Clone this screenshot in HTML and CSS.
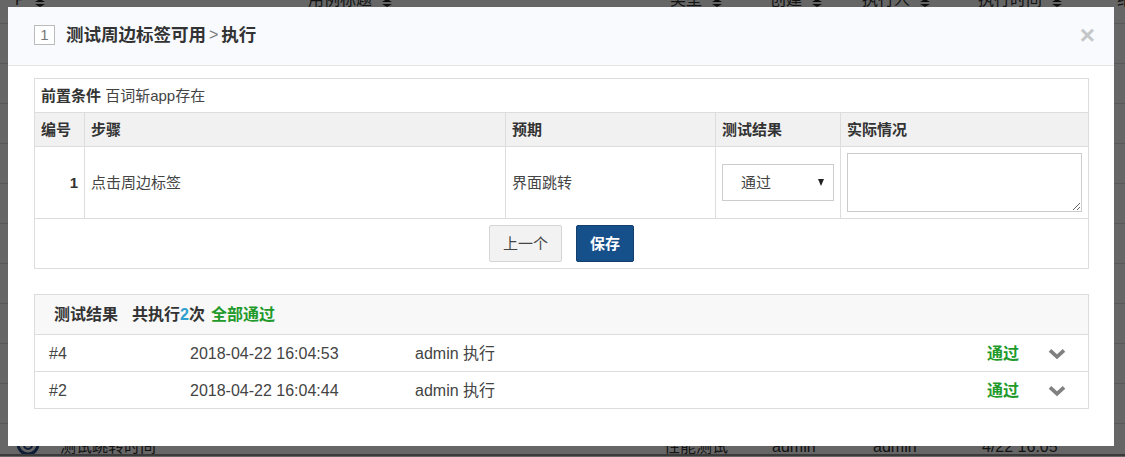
FILE: index.html
```html
<!DOCTYPE html>
<html lang="zh">
<head>
<meta charset="utf-8">
<title>测试周边标签可用 执行</title>
<link rel="stylesheet" href="styles.css">
</head>
<body>
<div class="page">
  <div class="bg-head">
    <span class="bh bh-id">P<svg class="sort" viewBox="0 0 10 8" width="10" height="8"><path d="M5 0 10 3H0zM5 8 0 5h10z"/></svg></span>
    <span class="bh bh-title">用例标题<svg class="sort" viewBox="0 0 10 8" width="10" height="8"><path d="M5 0 10 3H0zM5 8 0 5h10z"/></svg></span>
    <span class="bh bh-type">类型<svg class="sort" viewBox="0 0 10 8" width="10" height="8"><path d="M5 0 10 3H0zM5 8 0 5h10z"/></svg></span>
    <span class="bh bh-create">创建<svg class="sort" viewBox="0 0 10 8" width="10" height="8"><path d="M5 0 10 3H0zM5 8 0 5h10z"/></svg></span>
    <span class="bh bh-exec">执行人<svg class="sort" viewBox="0 0 10 8" width="10" height="8"><path d="M5 0 10 3H0zM5 8 0 5h10z"/></svg></span>
    <span class="bh bh-time">执行时间<svg class="sort" viewBox="0 0 10 8" width="10" height="8"><path d="M5 0 10 3H0zM5 8 0 5h10z"/></svg></span>
    <span class="bh bh-more">结果</span>
  </div>
  <div class="bg-row"></div><div class="bg-row"></div><div class="bg-row"></div><div class="bg-row"></div><div class="bg-row"></div>
  <div class="bg-row"></div><div class="bg-row"></div><div class="bg-row"></div><div class="bg-row"></div><div class="bg-row"></div>
  <div class="bg-row bg-last">
    <svg class="bg-pri" viewBox="0 0 24 24" width="24" height="24"><circle cx="12" cy="12" r="10" fill="none" stroke="#2a4d86" stroke-width="3"/><circle cx="12" cy="13" r="4" fill="none" stroke="#2a4d86" stroke-width="2"/></svg>
    <span class="bg-name">测试跳转时间</span>
    <span class="bg-type">性能测试</span>
    <span class="bg-creator">admin</span>
    <span class="bg-runner">admin</span>
    <span class="bg-date">4/22 16:05</span>
  </div>
</div>

<div class="backdrop"></div>

<div class="modal">
  <header class="modal-header">
    <span class="case-id">1</span>
    <strong class="modal-title">测试周边标签可用</strong>
    <span class="crumb">&gt;</span>
    <strong class="modal-title">执行</strong>
    <span class="close">×</span>
  </header>
  <div class="modal-body">
    <table class="steps">
      <colgroup>
        <col class="c-num"><col class="c-step"><col class="c-expect"><col class="c-result"><col class="c-real">
      </colgroup>
      <tr class="pre-row">
        <td colspan="5"><strong>前置条件</strong> 百词斩app存在</td>
      </tr>
      <tr class="head-row">
        <th>编号</th><th>步骤</th><th>预期</th><th>测试结果</th><th>实际情况</th>
      </tr>
      <tr class="step-row">
        <td class="num">1</td>
        <td>点击周边标签</td>
        <td>界面跳转</td>
        <td class="cell-select">
          <div class="select"><span>通过</span><i class="arrow"></i></div>
        </td>
        <td class="cell-area"><textarea class="area"></textarea></td>
      </tr>
      <tr class="action-row">
        <td colspan="5">
          <div class="actions">
            <button class="btn btn-prev" type="button">上一个</button>
            <button class="btn btn-save" type="button">保存</button>
          </div>
        </td>
      </tr>
    </table>

    <section class="results">
      <div class="results-head">
        <strong class="rh-title">测试结果</strong>
        <strong class="rh-count">共执行<span class="blue">2</span>次</strong>
        <strong class="green">全部通过</strong>
      </div>
      <div class="result-row">
        <span class="r-id">#4</span>
        <span class="r-date">2018-04-22 16:04:53</span>
        <span class="r-user">admin 执行</span>
        <strong class="r-status">通过</strong>
        <svg class="chev" viewBox="0 0 18 12" width="18" height="12"><path d="M2 2.4 9 8.8l7-6.4" fill="none" stroke="#808080" stroke-width="3.8"/></svg>
      </div>
      <div class="result-row">
        <span class="r-id">#2</span>
        <span class="r-date">2018-04-22 16:04:44</span>
        <span class="r-user">admin 执行</span>
        <strong class="r-status">通过</strong>
        <svg class="chev" viewBox="0 0 18 12" width="18" height="12"><path d="M2 2.4 9 8.8l7-6.4" fill="none" stroke="#808080" stroke-width="3.8"/></svg>
      </div>
    </section>
  </div>
</div>
</body>
</html>
```
FILE: styles.css
```css
* { box-sizing: border-box; }
html, body { margin: 0; height: 457px; overflow: hidden; }
body {
  font-family: "Liberation Sans", "Noto Sans CJK SC", sans-serif;
  font-size: 15px;
  line-height: 20px;
  color: #333;
  background: #fff;
}

/* page beneath the dialog */
.page { height: 473px; overflow: hidden; margin-top: -16px; }
.bg-head {
  height: 40px;
  display: flex;
  align-items: flex-start;
  border-bottom: 1px solid #ddd;
  font-size: 16px;
  padding: 6px 0 0 15px;
}
.bh { display: flex; align-items: center; flex: none; white-space: nowrap; }
.bh-id { width: 293px; }
.bh-title { width: 362px; }
.bh-type { width: 100px; }
.bh-create { width: 92px; }
.bh-exec { width: 116px; }
.bh-time { width: 139px; }
.sort { margin: 5px 0 0 10px; fill: #222; flex: none; }
.bh-id .sort { margin-left: 9px; }
.bg-row { height: 40px; border-bottom: 1px solid #ddd; }
.bg-last {
  display: flex;
  align-items: flex-start;
  padding-top: 13px;
  font-size: 16px;
  border-bottom: 0;
}
.bg-pri { flex: none; margin: -5px 20px 0 16px; }
.bg-name { width: 604px; }
.bg-type { width: 108px; }
.bg-creator { width: 101px; }
.bg-runner { width: 109px; }

.backdrop {
  position: fixed;
  inset: 0;
  background: rgba(0, 0, 0, .6);
}
.backdrop::after {
  content: "";
  position: absolute;
  left: 0; right: 0; bottom: 1px;
  height: 2px;
  background: #3a3a3a;
}

/* dialog */
.modal {
  position: fixed;
  left: 8px;
  top: 7px;
  width: 1106px;
  height: 439px;
  background: #fff;
}
.modal-header {
  height: 59px;
  display: flex;
  align-items: center;
  padding: 0 26px 2px;
  background: #f8fafe;
  border-bottom: 1px solid #e5e5e5;
}
.case-id {
  width: 21px;
  height: 20px;
  border: 1px solid #bbb;
  font-size: 15px;
  line-height: 18px;
  text-align: center;
  color: #777;
  background: #fff;
  margin-right: 11px;
}
.modal-title { font-size: 17.5px; font-weight: 700; color: #333; line-height: 24px; }
.crumb { font-size: 16px; color: #777; margin: 0 3px 0 3px; line-height: 24px; }
.close {
  margin-left: auto;
  margin-right: -7px;
  font-size: 26px;
  line-height: 24px;
  font-weight: 700;
  color: #c4c6c8;
}
.modal-body { padding: 12px 25px 0 26px; }

/* steps table */
.steps {
  width: 1054px;
  table-layout: fixed;
  border-collapse: collapse;
  border: 1px solid #ddd;
  background: #fff;
}
.c-num { width: 50px; }
.c-step { width: 421px; }
.c-expect { width: 210px; }
.c-result { width: 125px; }
.c-real { width: 248px; }
.steps td, .steps th {
  border: 1px solid #ddd;
  padding: 0 6px;
  text-align: left;
  font-size: 15px;
  line-height: 20px;
  color: #444;
}
.steps strong, .steps th { font-weight: 700; color: #333; }
.pre-row td { height: 34px; }
.head-row th { height: 34px; background: #f1f1f1; }
.step-row td { height: 72px; }
.steps .num { text-align: right; font-weight: 700; color: #333; }
.action-row td { height: 50px; }
.actions { display: flex; justify-content: center; gap: 14px; }
.btn {
  height: 37px;
  font: inherit;
  font-size: 15px;
  line-height: 20px;
  border-radius: 2px;
  cursor: pointer;
  padding: 0;
}
.btn-prev { width: 73px; background: #f2f2f2; border: 1px solid #d5d5d5; color: #444; }
.btn-save { width: 58px; background: #16508a; border: 1px solid #123f6e; color: #fff; font-weight: 700; }
.select {
  width: 112px;
  height: 37px;
  border: 1px solid #ccc;
  display: flex;
  align-items: center;
  justify-content: space-between;
  padding: 0 9px 0 18px;
  background: #fff;
}
.arrow {
  width: 0; height: 0;
  border-left: 3.5px solid transparent;
  border-right: 3.5px solid transparent;
  border-top: 7px solid #222;
}
.area {
  display: block;
  width: 235px;
  height: 59px;
  border: 1px solid #ccc;
  margin: 0;
  padding: 4px;
  background: #fff;
}

/* results */
.results {
  width: 1055px;
  margin-top: 25px;
  border: 1px solid #ddd;
  border-bottom: 0;
}
.results-head {
  height: 40px;
  display: flex;
  align-items: center;
  padding-left: 19px;
  background: #f8f8f8;
  border-bottom: 1px solid #ddd;
  font-size: 16px;
}
.rh-title { margin-right: 14px; font-weight: 700; }
.rh-count { margin-right: 6px; font-weight: 700; }
.blue { color: #2e9fd0; }
.green { color: #229a2b; font-weight: 700; }
.result-row {
  height: 37px;
  display: flex;
  align-items: center;
  padding-top: 2px;
  border-bottom: 1px solid #ddd;
  font-size: 16px;
  color: #444;
}
.r-id { width: 155px; padding-left: 14px; }
.r-date { width: 225px; }
.r-user { width: 572px; }
.r-status { width: 61px; color: #229a2b; font-weight: 700; }
.chev { flex: none; }
```
